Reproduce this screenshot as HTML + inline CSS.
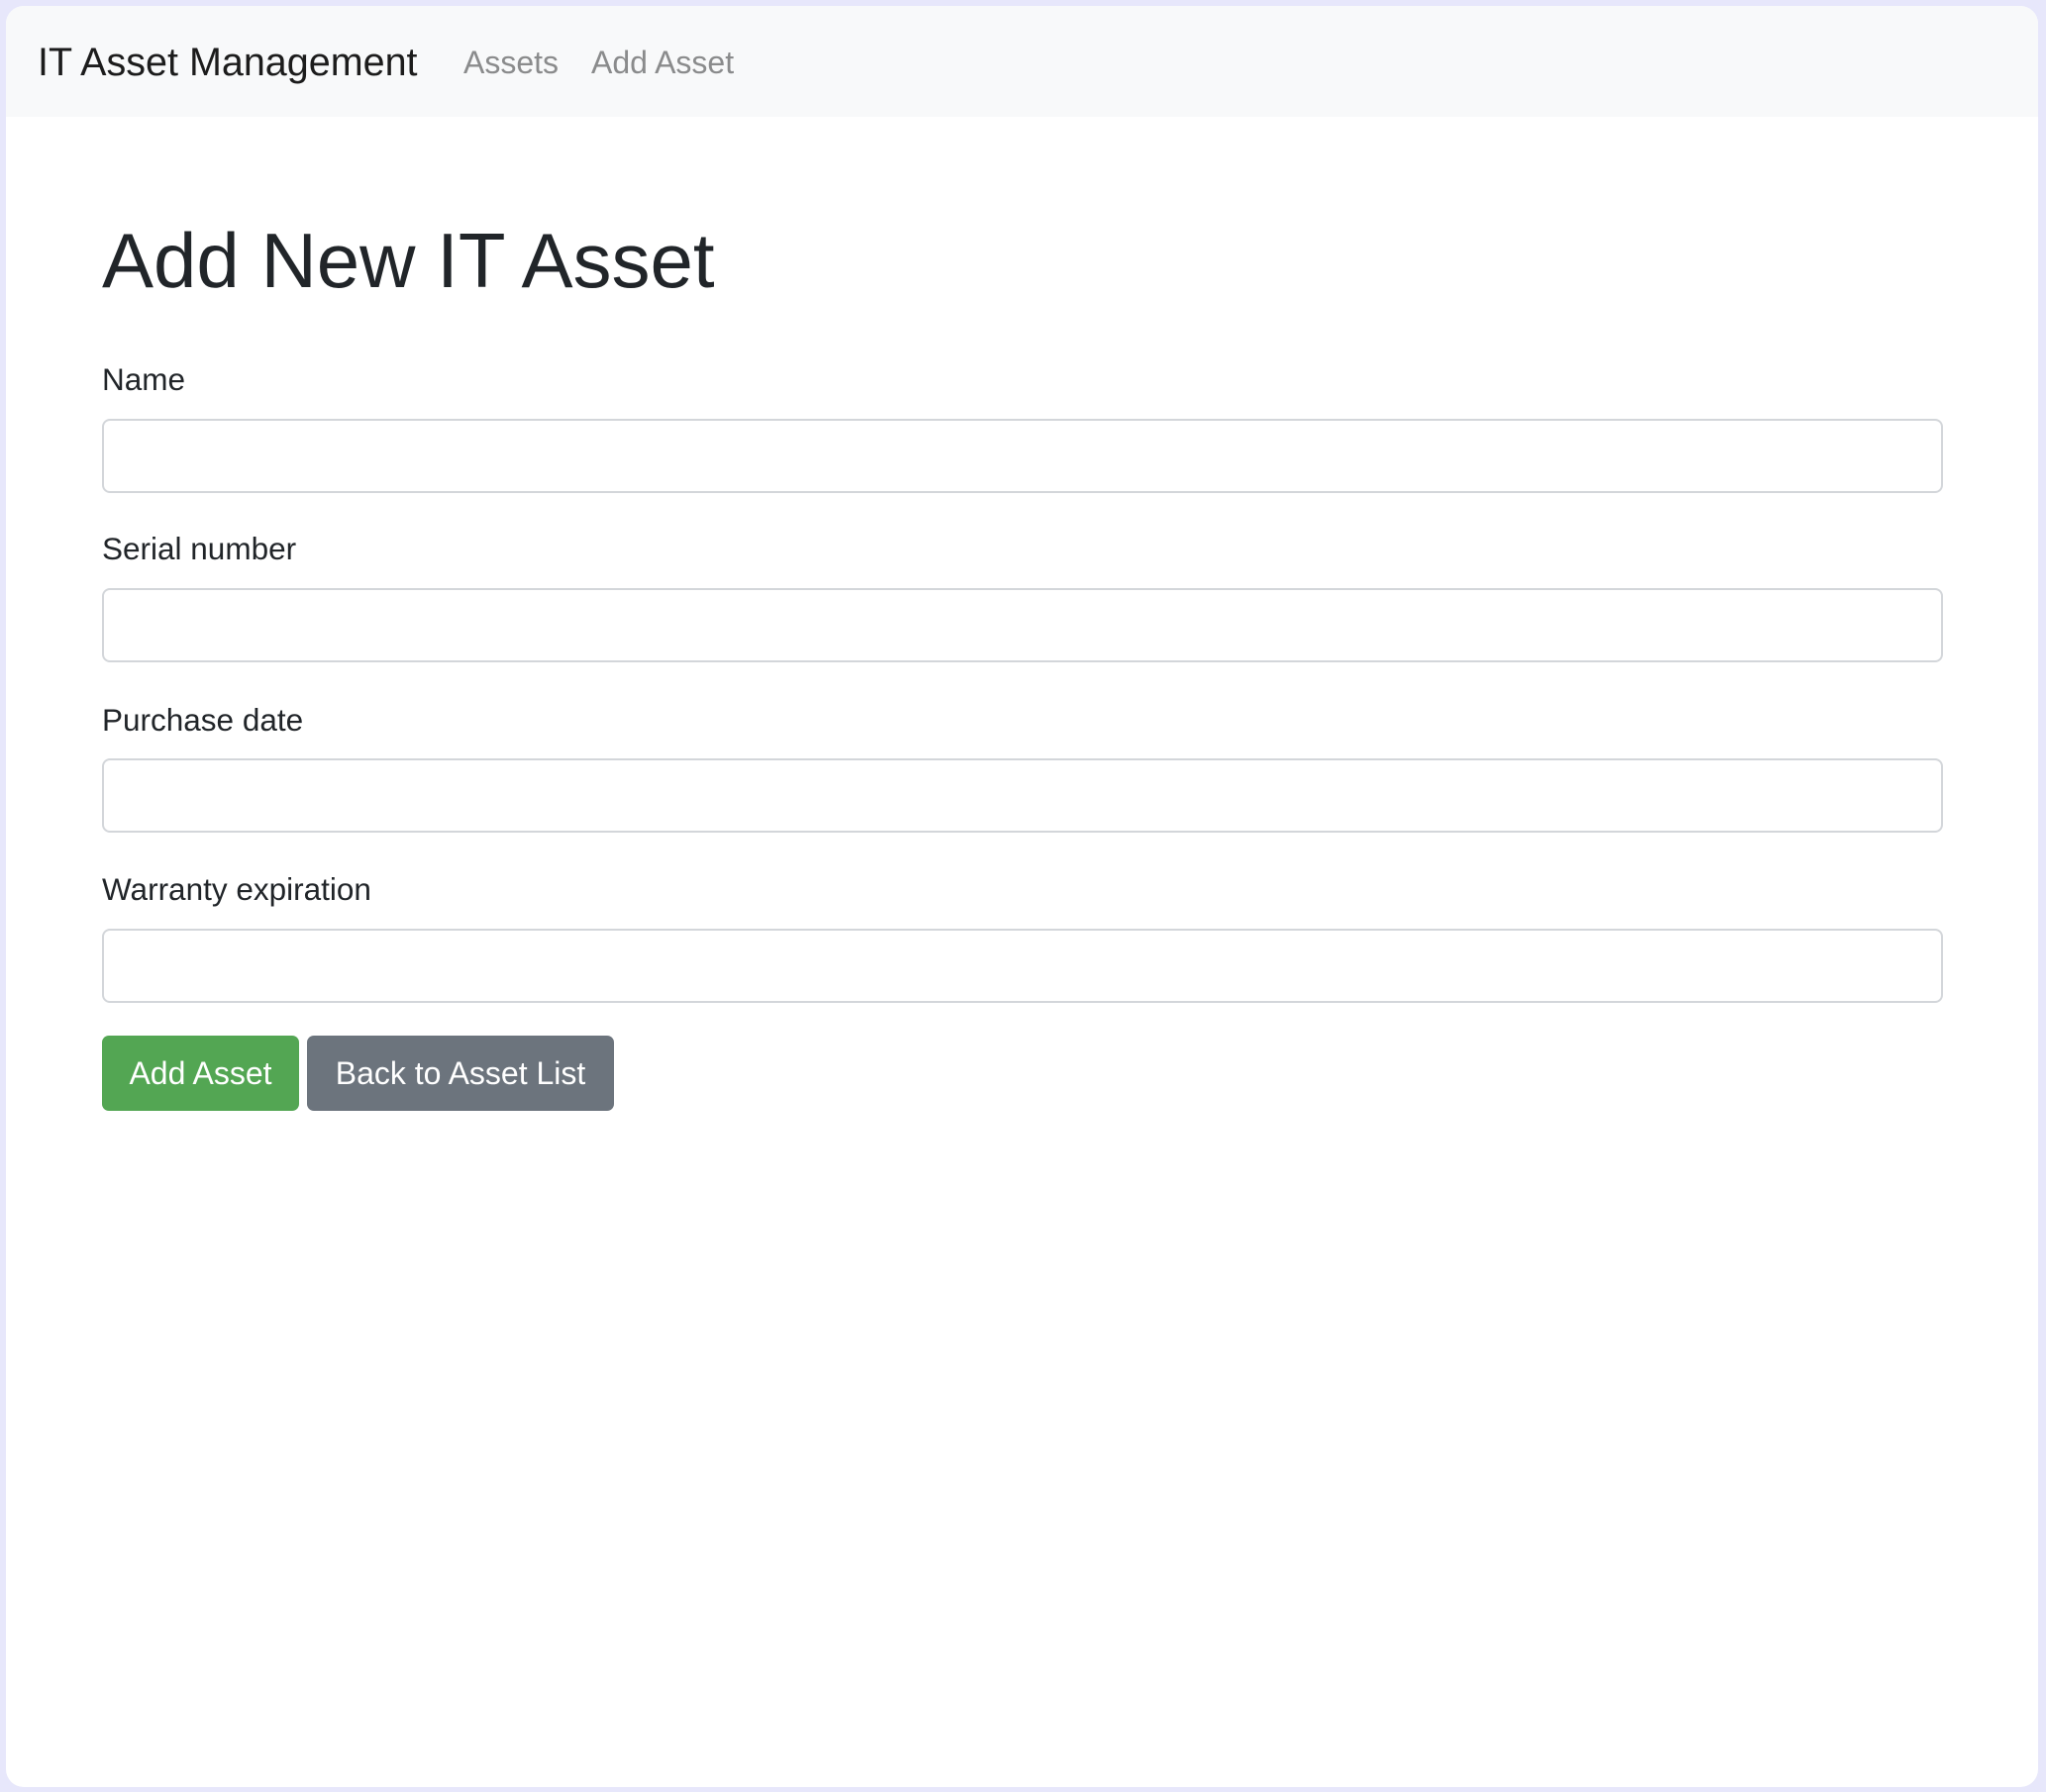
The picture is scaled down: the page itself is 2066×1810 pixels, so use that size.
<!DOCTYPE html>
<html><head><meta charset="utf-8"><style>
*{margin:0;padding:0;box-sizing:border-box}
html,body{width:2066px;height:1810px;background:#e7e7fb;overflow:hidden;font-family:"Liberation Sans",Helvetica,Arial,sans-serif}
#card{position:absolute;left:6px;top:6px;width:2052px;height:1799px;background:#fff;border-radius:18px;overflow:hidden}
#nav{position:absolute;left:0;top:0;width:100%;height:112px;background:#f8f9fa}
.t{position:absolute;white-space:nowrap;line-height:1}
.inp{position:absolute;left:97px;width:1859px;height:75px;border:2px solid #d3d6da;border-radius:8px;background:#fff}
.btn{position:absolute;top:1040px;height:76px;border-radius:7px;color:#fff;font-size:32px;display:flex;align-items:center;justify-content:center}
</style></head><body>
<div id="card">
<div id="nav">
<div class="t" style="left:32px;top:38px;font-size:39.5px;color:#1c1c1c">IT Asset Management</div>
<div class="t" style="left:462px;top:41px;font-size:32px;color:#8a8b8c">Assets</div>
<div class="t" style="left:591px;top:41px;font-size:32px;color:#8a8b8c">Add Asset</div>
</div>
<div class="t" style="left:97px;top:218px;font-size:78px;color:#212529">Add New IT Asset</div>
<div class="t" style="left:97px;top:362px;font-size:31.5px;color:#212529">Name</div>
<div class="inp" style="top:417px"></div>
<div class="t" style="left:97px;top:533px;font-size:31.5px;color:#212529">Serial number</div>
<div class="inp" style="top:588px"></div>
<div class="t" style="left:97px;top:706px;font-size:31.5px;color:#212529">Purchase date</div>
<div class="inp" style="top:760px"></div>
<div class="t" style="left:97px;top:877px;font-size:31.5px;color:#212529">Warranty expiration</div>
<div class="inp" style="top:932px"></div>
<div class="btn" style="left:97px;width:199px;background:#53a653">Add Asset</div>
<div class="btn" style="left:304px;width:310px;background:#6c747d">Back to Asset List</div>
</div>
</body></html>
